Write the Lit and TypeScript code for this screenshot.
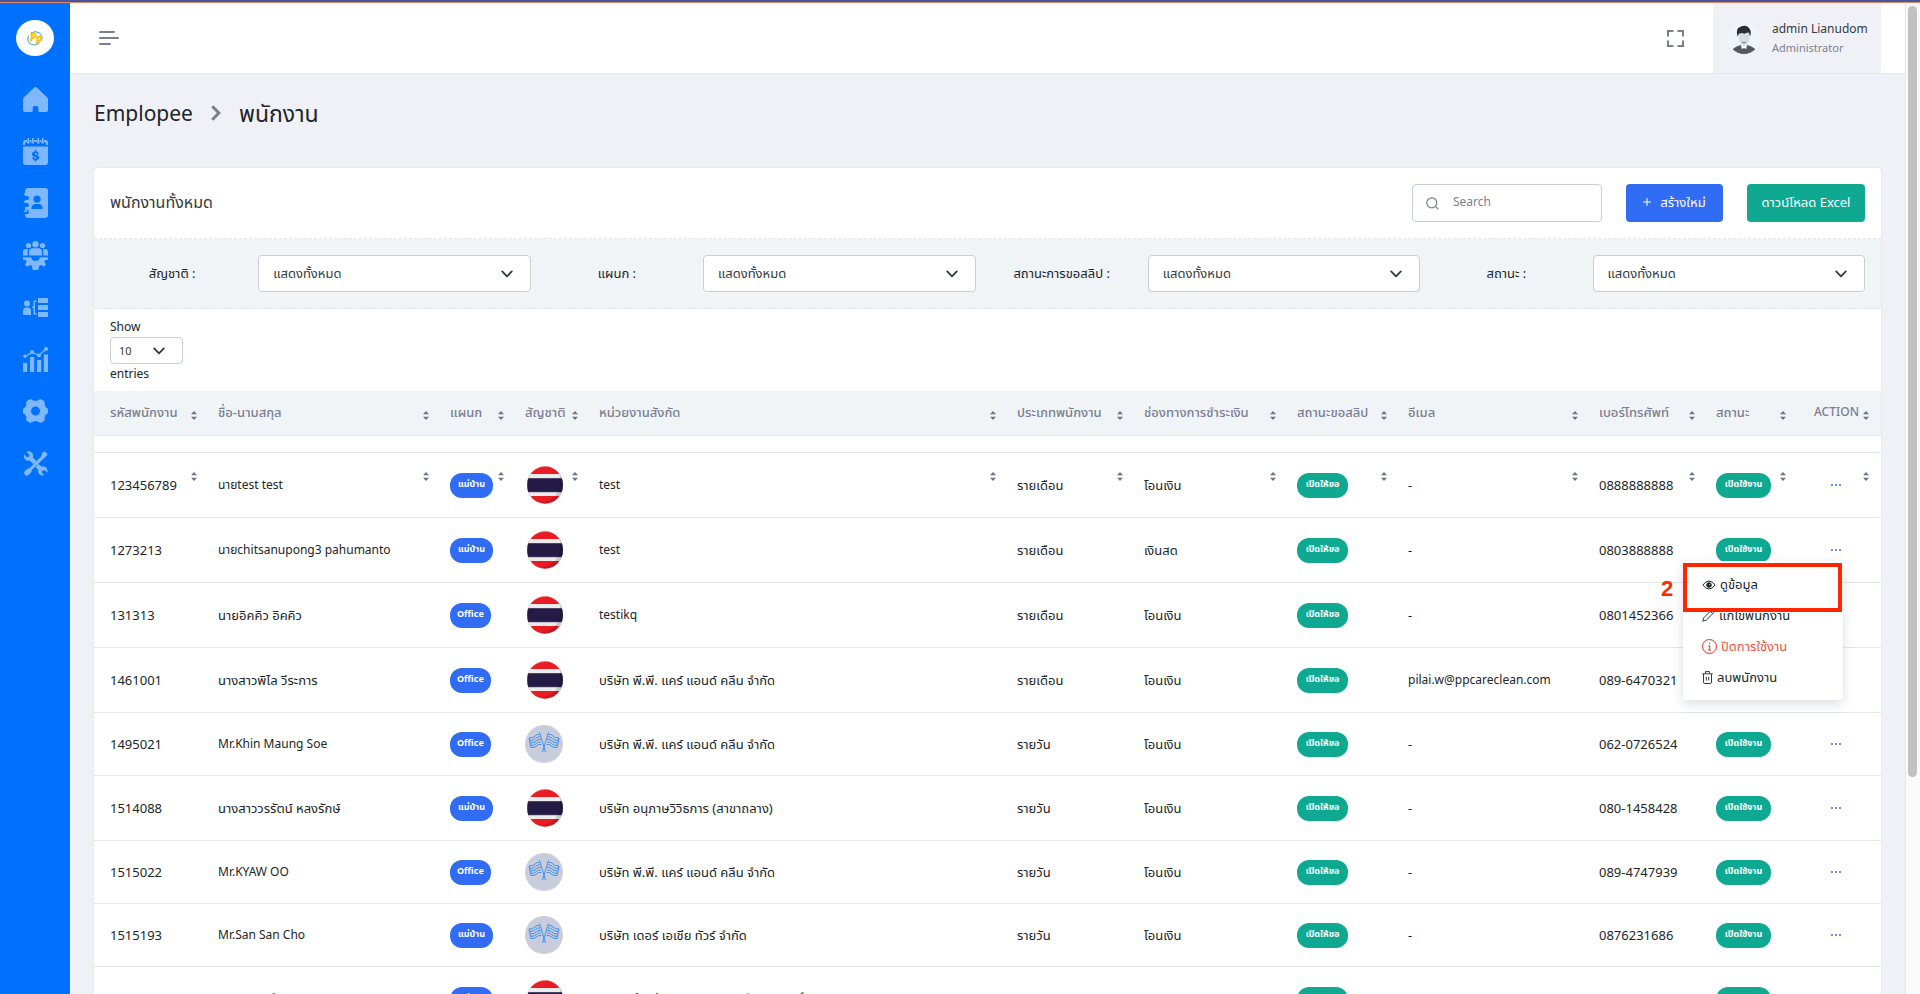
import { LitElement, html, css, svg, nothing } from "lit";
import { customElement, state } from "lit/decorators.js";
import { classMap } from "lit/directives/class-map.js";

type Employee = {
  id: string;
  name: string;
  dept: string;
  thai: boolean;
  unit: string;
  type: string;
  pay: string;
  email: string;
  phone: string;
};

const PP = "บริษัท พี.พี. แคร์ แอนด์ คลีน จำกัด";

const EMPLOYEES: Employee[] = [
  { id: "123456789", name: "นายtest test", dept: "แม่บ้าน", thai: true, unit: "test", type: "รายเดือน", pay: "โอนเงิน", email: "-", phone: "0888888888" },
  { id: "1273213", name: "นายchitsanupong3 pahumanto", dept: "แม่บ้าน", thai: true, unit: "test", type: "รายเดือน", pay: "เงินสด", email: "-", phone: "0803888888" },
  { id: "131313", name: "นายอิคคิว อิคคิว", dept: "Office", thai: true, unit: "testikq", type: "รายเดือน", pay: "โอนเงิน", email: "-", phone: "0801452366" },
  { id: "1461001", name: "นางสาวพิไล วีระการ", dept: "Office", thai: true, unit: PP, type: "รายเดือน", pay: "โอนเงิน", email: "pilai.w@ppcareclean.com", phone: "089-6470321" },
  { id: "1495021", name: "Mr.Khin Maung Soe", dept: "Office", thai: false, unit: PP, type: "รายวัน", pay: "โอนเงิน", email: "-", phone: "062-0726524" },
  { id: "1514088", name: "นางสาววรรัตน์ หลงรักษ์", dept: "แม่บ้าน", thai: true, unit: "บริษัท อนุภาษวิวิธการ (สาขาถลาง)", type: "รายวัน", pay: "โอนเงิน", email: "-", phone: "080-1458428" },
  { id: "1515022", name: "Mr.KYAW OO", dept: "Office", thai: false, unit: PP, type: "รายวัน", pay: "โอนเงิน", email: "-", phone: "089-4747939" },
  { id: "1515193", name: "Mr.San San Cho", dept: "แม่บ้าน", thai: false, unit: "บริษัท เดอร์ เอเชีย ทัวร์ จำกัด", type: "รายวัน", pay: "โอนเงิน", email: "-", phone: "0876231686" },
  { id: "1534075", name: "นางสิวกร ด้านอำนวย", dept: "แม่บ้าน", thai: true, unit: "บริษัท ห้างหุ้นโซลีเมนที คลีนน่า รักษ์ภักดิ์ (ประเทศไทย) จำกัด (มหาชน)", type: "รายวัน", pay: "โอนเงิน", email: "-", phone: "082-4326530" },
];

const COLUMNS = [
  { key: "id", label: "รหัสพนักงาน" },
  { key: "name", label: "ชื่อ-นามสกุล" },
  { key: "dept", label: "แผนก" },
  { key: "nation", label: "สัญชาติ" },
  { key: "unit", label: "หน่วยงานสังกัด" },
  { key: "type", label: "ประเภทพนักงาน" },
  { key: "pay", label: "ช่องทางการชำระเงิน" },
  { key: "slip", label: "สถานะขอสลิป" },
  { key: "email", label: "อีเมล" },
  { key: "phone", label: "เบอร์โทรศัพท์" },
  { key: "status", label: "สถานะ" },
  { key: "action", label: "ACTION" },
];

const FILTERS = ["สัญชาติ :", "แผนก :", "สถานะการขอสลิป :", "สถานะ :"];

/* Latin letters run wider than Thai ones, so values that hold them are set one size down. */
const hasLatin = (text: string) => /[A-Za-z]/.test(text);

const chevron = html`<svg class="chevron" viewBox="0 0 12 12" width="12" height="12" fill="none" stroke="#343a40" stroke-width="1.8" stroke-linecap="round" stroke-linejoin="round" aria-hidden="true"><path d="M1.2 3.4 6 8.4 10.800 3.400"/></svg>`;

const NAV: { label: string; art: unknown; h: number }[] = [
  { label: "Home", h: 25, art: svg`<path d="M11 .7a2.200 2.200 0 0 1 3 0L24.300 10.500Q25 11.200 25 12.200V23a2 2 0 0 1-2 2H16.500Q15.300 25 15.300 23.800V20.500Q15.300 19 13.900 19H11.100Q9.700 19 9.700 20.500V23.800Q9.700 25 8.500 25H2A2 2 0 0 1 0 23V12.200Q0 11.200.7 10.500Z"/>` },
  { label: "Payroll", h: 27, art: svg`<path d="M4.500 0h1.500v4.500H4.500zM9 0h1.500v4.500H9zM14.500 0H16v4.500h-1.500zM19 0h1.500v4.500H19z"/><path d="M0 7V4.500Q0 2 2.500 2H4v3.500h2.500V2H8.500v3.500H11V2h3v3.500h2.500V2h2v3.500H21V2h1.500Q25 2 25 4.500V7h-2V5.500Q23 4 21.500 4h-18Q2 4 2 5.500V7z"/><path fill-rule="evenodd" d="M0 8.500h25V24a3 3 0 0 1-3 3H3a3 3 0 0 1-3-3zM11.800 12v1.400c-4 .8-3.600 4.600-.3 5.300 2.600.6 2.200 2 1 2-1.100 0-1.500-.6-1.500-1.400H9.200c0 1.700 1 2.700 2.600 3V23.500h1.500v-1.200c4-.8 3.600-4.600.5-5.300-2.600-.6-2.400-1.900-1.300-1.900 1 0 1.400.6 1.500 1.300h1.800c-.1-1.600-1-2.700-2.500-3V12z"/>` },
  { label: "Contacts", h: 30, art: svg`<path fill-rule="evenodd" d="M5.500 0H22a3 3 0 0 1 3 3v24a3 3 0 0 1-3 3H5a3 3 0 0 1-3-3v-1h2a2 2 0 0 0 0-4H2v-3h2a2 2 0 0 0 0-4H2v-3h2a2 2 0 0 0 0-4H2V3a3 3 0 0 1 3.500-3zM14 7.500a3.600 3.600 0 1 0 0 7.200 3.600 3.600 0 0 0 0-7.200zM8.500 21h11v-1.500a4 4 0 0 0-4-3.500h-3a4 4 0 0 0-4 3.500z"/><path d="M1 5.500h3a1 1 0 0 1 0 1.500H1a1 1 0 0 1 0-1.500zM1 13h3a1 1 0 0 1 0 1.500H1A1 1 0 0 1 1 13zM1 22.500h3a1 1 0 0 1 0 1.500H1a1 1 0 0 1 0-1.500z"/>` },
  { label: "Team", h: 29, art: svg`<circle cx="5.500" cy="4.500" r="2.600"/><circle cx="19.500" cy="4.500" r="2.600"/><circle cx="12.500" cy="3.300" r="3.200"/><path d="M0 14.500v-3.500a3 3 0 0 1 3-3h2.500a5 5 0 0 0-.8 3v3.500zM25 14.500v-3.500a3 3 0 0 0-3-3h-2.500a5 5 0 0 1 .8 3v3.500zM6 14.500V11q0-3.800 3.800-3.800h5.400Q19 7.200 19 11v3.500z"/><path d="M0 16.200h8a4.600 4.600 0 0 0 9 0h8v2.600l-3 .4-.7 1.600 1.800 2.600-2.300 2.300-2.600-1.700-2 .8-.9 4.200h-5.600l-.9-4.200-2-.8-2.600 1.700-2.300-2.300 1.800-2.600-.7-1.600L0 18.800z"/>` },
  { label: "Organisation", h: 19, art: svg`<circle cx="4" cy="5.500" r="3"/><path d="M0 17v-4q0-3.500 3.500-3.500h1Q8 9.500 8 13v4zM9 8.500h1.500v-6h3V4H12v11h1.500v1.500h-3V10H9zM15 0h10v5H15zM15 7h10v5H15zM15 14h10v5H15z"/>` },
  { label: "Reports", h: 25, art: svg`<path d="M0 16h4.200v9H0zM7 10h4.200v15H7zM14 13h4.200v12H14zM20.800 7.500H25V25h-4.200z"/><path d="m2 9.500 7-4 7 2.800L23 2" fill="none" stroke="currentColor" stroke-width="1.300"/><circle cx="2" cy="9.300" r="1.800"/><circle cx="9" cy="5" r="2"/><circle cx="16" cy="8.300" r="1.900"/><circle cx="23" cy="2" r="2"/>` },
  { label: "Settings", h: 24, art: svg`<path fill-rule="evenodd" d="M6.500.5a2 2 0 0 1 2 0l2.200 1.300h3.600L16.500.5a2 2 0 0 1 2 0l2.500 1.600a2 2 0 0 1 .8 1.700l-.1 2.400 1.300 2.300 1.300.8a1.500 1.500 0 0 1 .7 1.300v2.800a1.500 1.500 0 0 1-.7 1.300l-1.300.8-1.300 2.300.1 2.400a2 2 0 0 1-.8 1.700l-2.500 1.600a2 2 0 0 1-2 0l-2.200-1.300h-3.600l-2.200 1.300a2 2 0 0 1-2 0L4 21.900a2 2 0 0 1-.8-1.700l.1-2.400L2 15.500l-1.300-.8A1.500 1.500 0 0 1 0 13.400v-2.800a1.500 1.500 0 0 1 .7-1.300L2 8.500l1.300-2.300-.1-2.400A2 2 0 0 1 4 2.100zM12.500 7.500a4.500 4.500 0 1 0 0 9 4.500 4.500 0 0 0 0-9z"/>` },
  { label: "Tools", h: 25, art: svg`<path d="M1 3.200 3.200 5.800q1.600.8 2.600-.6.800-1-.1-2.200L3.600 1.100Q7-.8 9.300 2.200q1.400 2 .5 4.200l3.500 3.600-3 3-3.700-3.500Q3 10.300 1.500 7.500.500 5.200 1 3.200zM18.400 15.500q3.200-1 5.300 1.800 1.200 2 .6 4.500L22 19.600q-1.600-.8-2.700.4-.9 1.200 0 2.300l1.900 1.900q-3.300 1.200-5.300-1.400-1.300-1.800-.6-4.100l-2.800-2.800 3-3zM21.500.5 24.300 2.500V4.200L20.500 7.800 8.500 19.300q.5 1-.5 2.200l-2.500 2.600q-1.800 1.300-3.400-.2-1.700-1.700-.6-3.300L4.200 17.800q1-.9 2.200-.5L18 5.400 19.500 1.500z"/>` },
];

const thaiFlag = html`<svg class="flag" viewBox="0 0 38 38" role="img" aria-label="ไทย">
  <clipPath id="disc"><ellipse cx="20" cy="19" rx="18" ry="18.700"/></clipPath>
  <g clip-path="url(#disc)">
    <path fill="#e81c22" d="M0 0h38v38H0z"/><path fill="#ececec" d="M0 8h38v22H0z"/><path fill="#231b45" d="M0 12.500h38v13.500H0z"/>
    <path fill="#4b4467" d="M0 12h38v1H0zM0 25.500h38v.8H0z"/>
    <path fill="#000" opacity=".14" d="M32 3A19 19 0 0 1 10 36.500Q20 38 29 31 37 22 35 9z"/>
    <path fill="#fff" opacity=".22" d="M28 1.500Q13-1 5.500 8 1.500 14 3 24L0 26V0h30z"/>
  </g></svg>`;

const noFlag = html`<svg class="flag" viewBox="0 0 38 38" role="img" aria-label="ไม่ระบุ">
  <circle cx="19" cy="19" r="19" fill="#c9cddb"/>
  <g fill="none" stroke="#3d8ff0" stroke-width="1" stroke-linejoin="round">
    <path d="M14.500 7.500 20.500 27M23.500 7.500 17.500 27"/>
    <path d="M14.200 9.500Q11.500 9 10 11T4 13l2 9.500q4 .5 5.500-1.500t5-1.500"/>
    <path d="M15 12q-3-.5-4.500 1.500T4.800 15.500M15.600 14.500q-3-.5-4.500 1.500T5.300 18M16 17q-3-.5-4.500 1.500T5.700 20.300"/>
    <path d="M23.800 9.500Q26.500 9 28 11t6 2l-2 9.500q-4 .5-5.500-1.500t-5-1.500"/>
    <path d="M23 12q3-.5 4.500 1.500t5.700 2M22.400 14.500q3-.5 4.500 1.500t5.800 2M22 17q3-.5 4.500 1.500t5.800 1.800"/>
  </g></svg>`;

@customElement("app-root")
export class AppRoot extends LitElement {
  @state() private openMenu = "1273213";

  static styles = css`
    :host {
      display: flex;
      flex-direction: column;
      height: 100vh;
      overflow: hidden;
      background: #f0f1f7;
      color: #212529;
      font-family: "Noto Sans", "Noto Sans Thai", "Open Sans", sans-serif;
      font-size: 13px;
      line-height: 18px;
    }
    * { box-sizing: border-box; }
    button, input, select { font: inherit; color: inherit; margin: 0; }
    button { border: 0; background: none; padding: 0; cursor: pointer; }
    svg { display: block; }

    .strip { flex: none; height: 3px; background: #44549d; border-bottom: 1px solid #e08a6a; }
    .shell { flex: 1; min-height: 0; display: flex; }

    .sidebar { flex: none; width: 70px; background: #0070ff; display: flex; flex-direction: column; align-items: center; padding-top: 17px; }
    .logo { display: grid; place-items: center; width: 38px; height: 36px; border-radius: 50%; background: #fff; }
    .nav { display: flex; flex-direction: column; margin-top: 17px; align-self: stretch; }
    .nav a { height: 52px; display: grid; place-items: center; color: #80b8ff; padding-left: 1px; }

    .page { flex: 1; min-width: 0; overflow: hidden; }
    .topbar { height: 71px; background: #fff; border-bottom: 1px solid #e4e6ec; display: flex; align-items: stretch; padding: 0 24px 0 29px; }
    .burger { display: flex; flex-direction: column; gap: 4px; justify-content: center; }
    .burger i { display: block; height: 2px; border-radius: 1px; background: #7b7e92; }
    .burger .one { width: 16px; }
    .burger .two { width: 20px; }
    .burger .three { width: 12px; }
    .spacer { flex: 1; }
    .full { margin-right: 29px; color: #7b7e92; }
    .profile { width: 168px; background: #f0f1f7; display: flex; align-items: center; gap: 12px; padding-left: 15px; text-align: left; }
    .who { display: flex; flex-direction: column; }
    .who .name { font-size: 12px; line-height: 20px; color: #343a40; }
    .who .role { font-size: 11px; line-height: 18px; color: #7b7e92; }

    main { padding: 0 24px; }
    .crumbs { display: flex; align-items: center; height: 78px; gap: 18px; font-size: 23px; line-height: 32px; margin: 0 0 16px; font-weight: 400; }
    .crumbs h1 { font-size: 21px; font-weight: 400; margin: 0; }
    .card { background: #fff; border-radius: 4px; box-shadow: 0 0 2px rgba(50, 60, 110, .14); }
    .cardhead { display: flex; align-items: center; height: 71px; padding: 0 16px; border-bottom: 1px dashed #e2e5ea; }
    .cardhead h2 { margin: 0; flex: 1; font-size: 16px; line-height: 24px; font-weight: 400; color: #343a40; padding-bottom: 3px; }
    .search { display: flex; align-items: center; width: 190px; height: 38px; border: 1px solid #c8cfd8; border-radius: 4px; padding: 0 13px; gap: 14px; color: #7b7e92; margin-right: 24px; }
    .search input { border: 0; outline: 0; background: none; min-width: 0; flex: 1; padding: 0 0 2px; font-size: 12px; }
    .search input::placeholder { color: #7b7e92; opacity: 1; }
    .btn { height: 38px; border-radius: 4px; color: #fff; display: flex; align-items: center; justify-content: center; gap: 9px; white-space: nowrap; padding-bottom: 2px; }
    .create { width: 97px; background: #316cf4; margin-right: 24px; }
    .excel { width: 118px; background: #0fa992; }

    .filters { display: grid; grid-template-columns: repeat(4, 1fr); align-items: center; height: 70px; padding: 0 4px; background: #f0f4f7; border-bottom: 1px dashed #e2e5ea; }
    .filter { display: grid; grid-template-columns: 1fr 2fr; align-items: center; }
    .filter label { text-align: center; white-space: nowrap; padding-bottom: 2px; }
    .pick { position: relative; margin: 0 12px; }
    .pick select { appearance: none; display: block; width: 100%; height: 37px; border: 1px solid #c8cfd8; border-radius: 4px; background: #fff; padding: 0 36px 2px 14px; color: #343a40; }
    .chevron { position: absolute; right: 18px; top: 50%; margin-top: -6px; pointer-events: none; }

    .length { padding: 9px 16px; display: flex; flex-direction: column; align-items: flex-start; height: 82px; font-size: 12px; }
    .length .pick { margin: 1px 0; width: 73px; }
    .length .pick select { height: 27px; font-size: 11px; padding: 0 24px 0 8px; }

    table { width: 100%; table-layout: fixed; border-collapse: separate; border-spacing: 0; }
    th, td { position: relative; padding: 0 0 0 12px; text-align: left; vertical-align: middle; border-bottom: 1px solid #e4e6ea; white-space: nowrap; }
    th { height: 45px; padding-bottom: 2px; background: #f0f4f7; color: #7b7e92; font-weight: 500; }
    th:first-child, td:first-child { padding-left: 16px; }
    .ghost th { height: 17px; background: #fff; padding-bottom: 0; }
    td { height: 63px; }
    .thai td { height: 65px; }
    .latin { font-size: 12px; }
    .c-id { width: 112px; } .c-name { width: 232px; } .c-dept { width: 75px; } .c-nation { width: 74px; }
    .c-type { width: 127px; } .c-pay { width: 153px; } .c-slip { width: 111px; } .c-email { width: 191px; }
    .c-phone { width: 117px; } .c-status { width: 91px; } .c-action { width: 86px; }
    th.action { padding-left: 19px; font-size: 12px; }
    .sort { position: absolute; right: 9px; top: 20px; }
    .action .sort { right: 12px; }
    .ghost .sort { top: 36px; z-index: 1; }
    .badge { display: inline-block; height: 25px; line-height: 22px; border-radius: 12px; padding: 0 8px; font-size: 9px; font-weight: 700; color: #fff; background: #0fa992; vertical-align: top; text-align: center; }
    .badge.dept { background: #316cf4; padding: 0 7px; }
    .badge.dept.th { min-width: 43px; }
    .badge.slip { min-width: 51px; }
    .badge.status { min-width: 55px; }
    .flag { width: 38px; height: 38px; }
    td.action { padding: 0 5px 4px 0; text-align: center; }
    .more { display: inline-flex; gap: 2px; padding: 6px; vertical-align: middle; }
    .more i { width: 2px; height: 2px; border-radius: 1px; background: #316cf4; }

    .menu { position: absolute; z-index: 3; right: 38px; top: 43px; width: 160px; height: 139px; background: #fff; border-radius: 4px; box-shadow: 0 4px 12px rgba(40, 50, 70, .16); padding: 7px 0 0 19px; text-align: left; }
    .menu a { display: flex; align-items: center; gap: 4px; height: 31px; color: #212529; text-decoration: none; }
    .menu a svg { margin-top: 2px; }
    .menu a.danger { color: #f4523b; }
    .mark { position: absolute; left: 0; top: 2px; width: 159px; height: 49px; border: 4px solid #ff2600; pointer-events: none; }
    .step { position: absolute; left: -22px; top: 16px; font: 700 22px/24px "Liberation Sans", sans-serif; color: #ff2600; }

    .track { flex: none; width: 15px; background: #fafafa; border-left: 1px solid #e6e6e6; padding: 3px 2px 0; }
    .thumb { height: 78%; border-radius: 5px; background: #c1c1c1; width: 9px; }
  `;

  private sortIcon() {
    return html`<svg class="sort" width="6" height="9" viewBox="0 0 6 9" fill="#6f7387" aria-hidden="true"><path d="M3 0 6 3.200H0zM0 5.800h6L3 9z"/></svg>`;
  }

  private select(id: string) {
    return html`<div class="pick"><select id=${id}><option>แสดงทั้งหมด</option></select>${chevron}</div>`;
  }

  private cell(text: string) {
    return html`<td class=${classMap({ latin: hasLatin(text) })}>${text}</td>`;
  }

  private menu() {
    return html`<div class="menu">
      <a href="#view"><svg width="14" height="10" viewBox="0 0 14 10" fill="none" stroke="#212529"><path d="M.8 5Q7-3 13.200 5 7 13 .8 5z"/><circle cx="7" cy="5" r="2.300" fill="#212529"/><circle cx="7.600" cy="4.400" r=".5" fill="#fff" stroke="none"/></svg>ดูข้อมูล</a>
      <a href="#edit"><svg width="13" height="13" viewBox="0 0 13 13" fill="none" stroke="#343a40"><path d="M.8 12.200 1.800 8.800 9.700.9l2.400 2.400-7.900 7.900zM8.300 2.300l2.400 2.400"/></svg>แก้ไขพนักงาน</a>
      <a class="danger" href="#disable"><svg width="15" height="15" viewBox="0 0 15 15" fill="none" stroke="#ef2b2b"><circle cx="7.500" cy="7.500" r="7"/><path d="M7.500 3.700v1.200M6.300 6.800h1.400v4M6 11h3"/></svg>ปิดการใช้งาน</a>
      <a href="#delete"><svg width="11" height="13" viewBox="0 0 11 13" fill="none" stroke="#343a40"><path d="M.3 2.800h10.400M3.500 2.500V.6h4v1.900M1.500 3v8.200q0 1.300 1.300 1.300h5.400q1.300 0 1.300-1.300V3M4.300 6v3.500M6.700 6v3.500"/></svg>ลบพนักงาน</a>
      <div class="mark"></div>
      <span class="step">2</span>
    </div>`;
  }

  private row(e: Employee) {
    return html`<tr class=${classMap({ thai: e.thai })}>
      ${this.cell(e.id)}
      ${this.cell(e.name)}
      <td><span class=${classMap({ badge: true, dept: true, th: !hasLatin(e.dept) })}>${e.dept}</span></td>
      <td>${e.thai ? thaiFlag : noFlag}</td>
      ${this.cell(e.unit)}
      ${this.cell(e.type)}
      ${this.cell(e.pay)}
      <td><span class="badge slip">เปิดให้ขอ</span></td>
      ${this.cell(e.email)}
      ${this.cell(e.phone)}
      <td><span class="badge status">เปิดใช้งาน</span></td>
      <td class="action">
        <button class="more" aria-label="Actions" @click=${() => (this.openMenu = this.openMenu === e.id ? "" : e.id)}><i></i><i></i><i></i></button>
        ${this.openMenu === e.id ? this.menu() : nothing}
      </td>
    </tr>`;
  }

  render() {
    return html`
      <div class="strip"></div>
      <div class="shell">
        <aside class="sidebar">
          <div class="logo">
            <svg width="16" height="15" viewBox="0 0 16 15" fill="none">
              <path d="M4 1.800Q9-.8 13 2.300 16.500 6 14.500 9.500M1.700 4.500Q-.6 10 3.500 13q5 2.500 9-1.500" stroke="#3a9bc0" stroke-width="1"/>
              <path d="M3.800 10.500 5.200 3.200M3.200 3.600Q8.500.8 8.600 4 8.300 6.800 5 7.200M9.500 13.500 10.900 6.500M9 6.800q5-2.600 5 .6-.3 2.800-3.300 3" stroke="#f9c515" stroke-width="2"/>
            </svg>
          </div>
          <nav class="nav">
            ${NAV.map((n) => html`<a href="#" aria-label=${n.label}><svg width="25" height=${n.h} viewBox="0 0 25 ${n.h}" fill="currentColor">${n.art}</svg></a>`)}
          </nav>
        </aside>
        <div class="page">
          <header class="topbar">
            <button class="burger" aria-label="Toggle menu"><i class="one"></i><i class="two"></i><i class="three"></i></button>
            <span class="spacer"></span>
            <button class="full" aria-label="Fullscreen"><svg width="17" height="17" viewBox="0 0 17 17" fill="none" stroke="currentColor" stroke-width="2"><path d="M1 6.500V1h5.500M10.500 1H16v5.500M16 10.500V16h-5.500M6.500 16H1v-5.500"/></svg></button>
            <button class="profile">
              <svg width="32" height="32" viewBox="0 0 32 32" aria-hidden="true">
                <clipPath id="av"><circle cx="16" cy="16" r="16"/></clipPath>
                <g clip-path="url(#av)"><path fill="#eef5fd" d="M0 0h32v32H0z"/>
                <path fill="#d7dbe2" d="M10.500 10h11v5q-.5 5-3 7v3h-5v-3q-2.500-2-3-7z"/>
                <path fill="#54585c" d="M4.500 27.500q3-3.500 8.500-4.500l3 3 3-3q5.500 1 8.500 4.500-4 5.500-11.500 5.500T4.500 27.500z"/>
                <path fill="#fff" d="m12.800 22.500 3.200 2 3.200-2-1 4.500-2.200-1-2.200 1z"/>
                <path fill="#2b2e31" d="M9.500 14.500Q7.500 6 12 5q6-3 9 1 3 3 1 8.500l-1-4-3 .5-2 1-1-1-4 .5z"/>
                <path fill="#7b7e92" d="M14 20h4v1h-4z"/></g>
              </svg>
              <span class="who"><span class="name">admin Lianudom</span><span class="role">Administrator</span></span>
            </button>
          </header>
          <main>
            <div class="crumbs">
              <h1>Emplopee</h1>
              <svg width="10" height="16" viewBox="0 0 10 16" fill="none" stroke="#7b7e92" stroke-width="3"><path d="m1.300 1.300 6.500 6.700-6.500 6.700"/></svg>
              <span>พนักงาน</span>
            </div>
            <section class="card">
              <div class="cardhead">
                <h2>พนักงานทั้งหมด</h2>
                <label class="search">
                  <svg width="13" height="13" viewBox="0 0 13 13" fill="none" stroke="currentColor" stroke-width="1.200"><circle cx="5.800" cy="5.800" r="5"/><path d="m9.400 9.400 3 3"/></svg>
                  <input type="text" placeholder="Search" aria-label="Search" />
                </label>
                <button class="btn create"><svg width="8" height="8" viewBox="0 0 8 8" stroke="#fff"><path d="M4 0v8M0 4h8"/></svg>สร้างใหม่</button>
                <button class="btn excel">ดาวน์โหลด Excel</button>
              </div>
              <div class="filters">
                ${FILTERS.map((f, i) => html`<div class="filter"><label for="f${i}">${f}</label>${this.select(`f${i}`)}</div>`)}
              </div>
              <div class="length">
                <label for="len">Show</label>
                <div class="pick"><select id="len"><option>10</option></select>${chevron}</div>
                <span>entries</span>
              </div>
              <table>
                <colgroup>${COLUMNS.map((c) => html`<col class="c-${c.key}" />`)}</colgroup>
                <thead>
                  <tr>${COLUMNS.map((c) => html`<th class=${c.key}>${c.label}${this.sortIcon()}</th>`)}</tr>
                  <tr class="ghost">${COLUMNS.map((c) => html`<th class=${c.key}>${this.sortIcon()}</th>`)}</tr>
                </thead>
                <tbody>${EMPLOYEES.map((e) => this.row(e))}</tbody>
              </table>
            </section>
          </main>
        </div>
        <div class="track"><div class="thumb"></div></div>
      </div>`;
  }
}
